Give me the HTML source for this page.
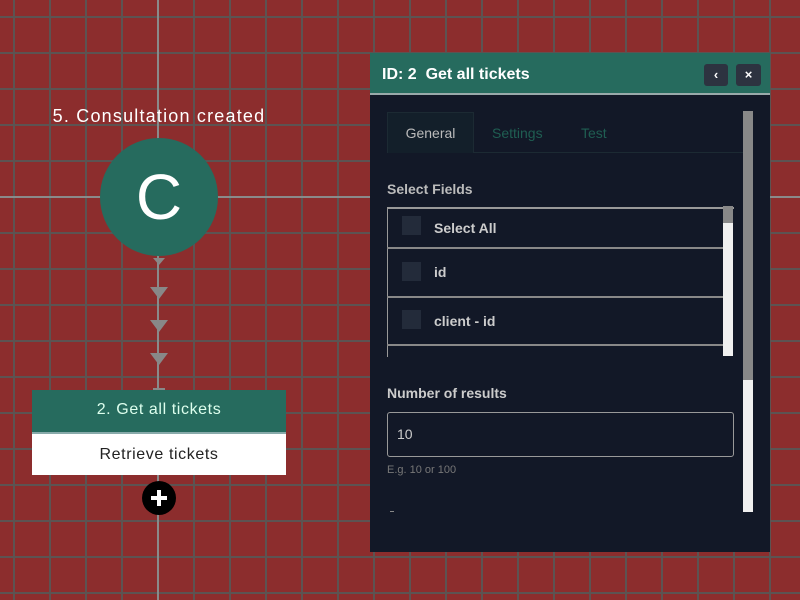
<!DOCTYPE html>
<html><head><meta charset="utf-8"><style>
*{margin:0;padding:0;box-sizing:border-box}
body{width:800px;height:600px;overflow:hidden;position:relative;font-family:"Liberation Sans","DejaVu Sans",sans-serif;
background-color:#8c2d2d;
background-image:linear-gradient(to right,#5c5352 0 2px,transparent 2px),linear-gradient(to bottom,#5c5352 0 2px,transparent 2px);
background-size:36px 36px;background-position:13px 16px;}
.abs{position:absolute}
</style></head><body>
<div class="abs" style="left:157px;top:0;width:2px;height:600px;background:#8a8a8a"></div>
<div class="abs" style="left:0;top:196px;width:800px;height:2px;background:#8a8a8a"></div>
<div class="abs" style="left:0;top:106px;width:318px;text-align:center;color:#fff;font-size:18px;letter-spacing:1.2px">5. Consultation created</div>
<div class="abs" style="left:100px;top:138px;width:118px;height:118px;border-radius:50%;background:#266b5e;color:#fff;font-size:64px;line-height:118px;text-align:center">C</div>
<svg class="abs" style="left:148px;top:255px" width="22" height="140">
<polygon points="5,3 17,3 11,10" fill="#888"/>
<polygon points="2,32 20,32 11,44" fill="#888"/>
<polygon points="2,65 20,65 11,77" fill="#888"/>
<polygon points="2,98 20,98 11,110" fill="#888"/>
<rect x="5" y="133" width="12" height="2" fill="#888"/>
</svg>
<div class="abs" style="left:32px;top:390px;width:254px;height:42px;background:#266b5e;color:#dfe;font-size:16px;line-height:40px;text-align:center;letter-spacing:0.6px">2. Get all tickets</div>
<div class="abs" style="left:32px;top:432px;width:254px;height:43px;background:#fff;color:#222;font-size:16px;line-height:42px;text-align:center;border-top:2px solid #8aa;letter-spacing:0.6px">Retrieve tickets</div>
<div class="abs" style="left:142px;top:481px;width:34px;height:34px;border-radius:50%;background:#000"></div>
<div class="abs" style="left:151px;top:496px;width:16px;height:4px;background:#fff"></div>
<div class="abs" style="left:157px;top:490px;width:4px;height:16px;background:#fff"></div>

<div class="abs" style="left:370px;top:53px;width:400px;height:499px;background:#121827">
<div class="abs" style="left:0;top:0;width:400px;height:42px;background:#266b5e;border-bottom:2px solid #9aa"></div>
<div class="abs" style="left:12px;top:13px;color:#fff;font-size:16px;font-weight:bold">ID: 2&nbsp; Get all tickets</div>
<div class="abs" style="left:334px;top:11px;width:24px;height:22px;background:#2d3340;border-radius:3px;color:#fff;font-size:13px;font-weight:bold;text-align:center;line-height:22px">&lsaquo;</div>
<div class="abs" style="left:366px;top:11px;width:25px;height:22px;background:#2d3340;border-radius:3px;color:#fff;font-size:13px;font-weight:bold;text-align:center;line-height:22px">×</div>
<div class="abs" style="left:17px;top:99px;width:356px;height:1px;background:#1c2a33"></div>
<div class="abs" style="left:17px;top:59px;width:87px;height:41px;background:#131f2a;border:1px solid #1c2a33;border-bottom:none;color:#bbb;font-size:14px;text-align:center;line-height:40px">General</div>
<div class="abs" style="left:122px;top:72px;color:#1f5e52;font-size:14px">Settings</div>
<div class="abs" style="left:211px;top:72px;color:#1f5e52;font-size:14px">Test</div>
<div class="abs" style="left:373px;top:58px;width:10px;height:401px;background:#f0f0f0"></div>
<div class="abs" style="left:373px;top:58px;width:10px;height:269px;background:#888"></div>
<div class="abs" style="left:17px;top:128px;color:#bbb;font-size:14px;font-weight:bold">Select Fields</div>
<div class="abs" style="left:17px;top:154px;width:347px;height:150px;border-left:1px solid #999;border-top:2px solid #999"></div>
<div class="abs" style="left:353px;top:153px;width:10px;height:150px;background:#f0f0f0"></div>
<div class="abs" style="left:353px;top:153px;width:10px;height:17px;background:#888"></div>
<div class="abs" style="left:17px;top:194px;width:336px;height:2px;background:#888"></div>
<div class="abs" style="left:17px;top:243px;width:336px;height:2px;background:#888"></div>
<div class="abs" style="left:17px;top:291px;width:336px;height:2px;background:#888"></div>
<div class="abs" style="left:32px;top:163px;width:19px;height:19px;background:#232b3a"></div>
<div class="abs" style="left:32px;top:209px;width:19px;height:19px;background:#232b3a"></div>
<div class="abs" style="left:32px;top:257px;width:19px;height:19px;background:#232b3a"></div>
<div class="abs" style="left:64px;top:167px;color:#ccc;font-size:14px;font-weight:bold">Select All</div>
<div class="abs" style="left:64px;top:211px;color:#ccc;font-size:14px;font-weight:bold">id</div>
<div class="abs" style="left:64px;top:260px;color:#ccc;font-size:14px;font-weight:bold">client - id</div>
<div class="abs" style="left:17px;top:332px;color:#ccc;font-size:14px;font-weight:bold">Number of results</div>
<div class="abs" style="left:17px;top:359px;width:347px;height:45px;border:1px solid #999;border-radius:3px;color:#ccc;font-size:14px;line-height:42px;padding-left:9px">10</div>
<div class="abs" style="left:17px;top:411px;color:#777;font-size:11px">E.g. 10 or 100</div>
<div class="abs" style="left:20px;top:458px;width:4px;height:1px;background:#888"></div>
</div>
</body></html>
